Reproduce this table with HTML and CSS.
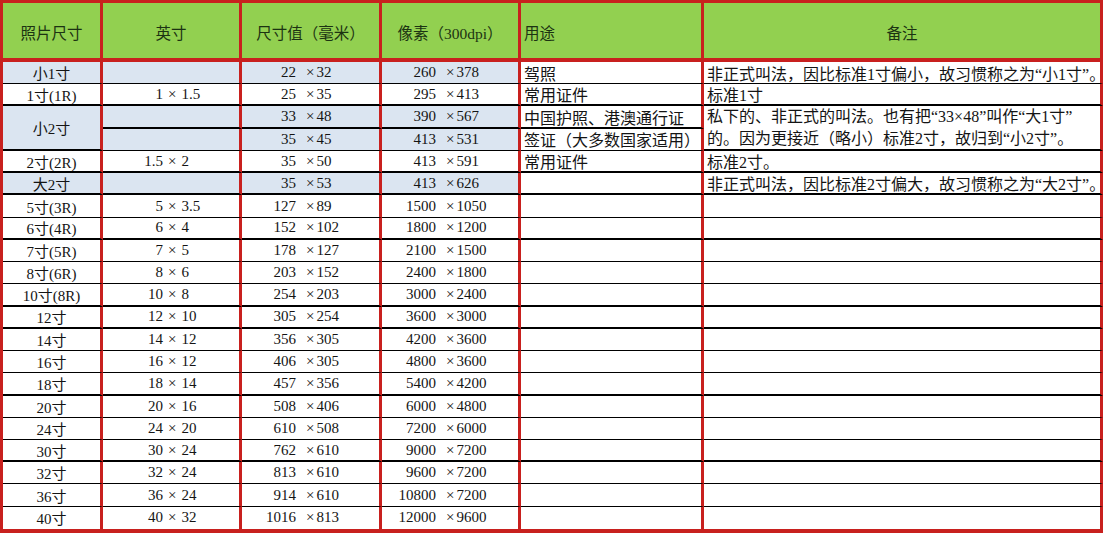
FILE: index.html
```html
<!DOCTYPE html>
<html lang="zh-CN">
<head>
<meta charset="utf-8">
<title>照片尺寸对照表</title>
<link rel="stylesheet" href="styles.css">
</head>
<body>
<div class="sheet">
  <div class="row">
    <div class="h">照片尺寸</div>
    <div class="h">英寸</div>
    <div class="h">尺寸值（毫米）</div>
    <div class="h">像素（300dpi）</div>
    <div class="h left">用途</div>
    <div class="h">备注</div>
  </div>

  <div class="row">
    <div class="c bl">小1寸</div>
    <div class="c bl"></div>
    <div class="c bl n3"><span class="a">22</span><span class="x">×</span><span>32</span></div>
    <div class="c bl n3"><span class="a">260</span><span class="x">×</span><span>378</span></div>
    <div class="c l">驾照</div>
    <div class="c l">非正式叫法，因比标准1寸偏小，故习惯称之为“小1寸”。</div>
  </div>

  <div class="row tk">
    <div class="c">1寸(1R)</div>
    <div class="c n2"><span class="a">1</span><span class="x">×</span><span>1.5</span></div>
    <div class="c n3"><span class="a">25</span><span class="x">×</span><span>35</span></div>
    <div class="c n3"><span class="a">295</span><span class="x">×</span><span>413</span></div>
    <div class="c l">常用证件</div>
    <div class="c l">标准1寸</div>
  </div>

  <div class="row tk">
    <div class="c bl span2">小2寸</div>
    <div class="c bl"></div>
    <div class="c bl n3"><span class="a">33</span><span class="x">×</span><span>48</span></div>
    <div class="c bl n3"><span class="a">390</span><span class="x">×</span><span>567</span></div>
    <div class="c l">中国护照、港澳通行证</div>
    <div class="c l span2 multi">私下的、非正式的叫法。也有把“33×48”叫作“大1寸”<br>的。因为更接近（略小）标准2寸，故归到“小2寸”。</div>
  </div>

  <div class="row">
    <div class="c bl"></div>
    <div class="c bl n3"><span class="a">35</span><span class="x">×</span><span>45</span></div>
    <div class="c bl n3"><span class="a">413</span><span class="x">×</span><span>531</span></div>
    <div class="c l">签证（大多数国家适用）</div>
  </div>

  <div class="row tk">
    <div class="c">2寸(2R)</div>
    <div class="c n2"><span class="a">1.5</span><span class="x">×</span><span>2</span></div>
    <div class="c n3"><span class="a">35</span><span class="x">×</span><span>50</span></div>
    <div class="c n3"><span class="a">413</span><span class="x">×</span><span>591</span></div>
    <div class="c l">常用证件</div>
    <div class="c l">标准2寸。</div>
  </div>

  <div class="row tk">
    <div class="c bl">大2寸</div>
    <div class="c bl"></div>
    <div class="c bl n3"><span class="a">35</span><span class="x">×</span><span>53</span></div>
    <div class="c bl n3"><span class="a">413</span><span class="x">×</span><span>626</span></div>
    <div class="c l"></div>
    <div class="c l">非正式叫法，因比标准2寸偏大，故习惯称之为“大2寸”。</div>
  </div>

  <div class="row">
    <div class="c">5寸(3R)</div>
    <div class="c n2"><span class="a">5</span><span class="x">×</span><span>3.5</span></div>
    <div class="c n3"><span class="a">127</span><span class="x">×</span><span>89</span></div>
    <div class="c n3"><span class="a">1500</span><span class="x">×</span><span>1050</span></div>
    <div class="c"></div>
    <div class="c"></div>
  </div>

  <div class="row tk">
    <div class="c">6寸(4R)</div>
    <div class="c n2"><span class="a">6</span><span class="x">×</span><span>4</span></div>
    <div class="c n3"><span class="a">152</span><span class="x">×</span><span>102</span></div>
    <div class="c n3"><span class="a">1800</span><span class="x">×</span><span>1200</span></div>
    <div class="c"></div>
    <div class="c"></div>
  </div>

  <div class="row">
    <div class="c">7寸(5R)</div>
    <div class="c n2"><span class="a">7</span><span class="x">×</span><span>5</span></div>
    <div class="c n3"><span class="a">178</span><span class="x">×</span><span>127</span></div>
    <div class="c n3"><span class="a">2100</span><span class="x">×</span><span>1500</span></div>
    <div class="c"></div>
    <div class="c"></div>
  </div>

  <div class="row">
    <div class="c">8寸(6R)</div>
    <div class="c n2"><span class="a">8</span><span class="x">×</span><span>6</span></div>
    <div class="c n3"><span class="a">203</span><span class="x">×</span><span>152</span></div>
    <div class="c n3"><span class="a">2400</span><span class="x">×</span><span>1800</span></div>
    <div class="c"></div>
    <div class="c"></div>
  </div>

  <div class="row tk">
    <div class="c">10寸(8R)</div>
    <div class="c n2"><span class="a">10</span><span class="x">×</span><span>8</span></div>
    <div class="c n3"><span class="a">254</span><span class="x">×</span><span>203</span></div>
    <div class="c n3"><span class="a">3000</span><span class="x">×</span><span>2400</span></div>
    <div class="c"></div>
    <div class="c"></div>
  </div>

  <div class="row tk">
    <div class="c">12寸</div>
    <div class="c n2"><span class="a">12</span><span class="x">×</span><span>10</span></div>
    <div class="c n3"><span class="a">305</span><span class="x">×</span><span>254</span></div>
    <div class="c n3"><span class="a">3600</span><span class="x">×</span><span>3000</span></div>
    <div class="c"></div>
    <div class="c"></div>
  </div>

  <div class="row">
    <div class="c">14寸</div>
    <div class="c n2"><span class="a">14</span><span class="x">×</span><span>12</span></div>
    <div class="c n3"><span class="a">356</span><span class="x">×</span><span>305</span></div>
    <div class="c n3"><span class="a">4200</span><span class="x">×</span><span>3600</span></div>
    <div class="c"></div>
    <div class="c"></div>
  </div>

  <div class="row">
    <div class="c">16寸</div>
    <div class="c n2"><span class="a">16</span><span class="x">×</span><span>12</span></div>
    <div class="c n3"><span class="a">406</span><span class="x">×</span><span>305</span></div>
    <div class="c n3"><span class="a">4800</span><span class="x">×</span><span>3600</span></div>
    <div class="c"></div>
    <div class="c"></div>
  </div>

  <div class="row tk">
    <div class="c">18寸</div>
    <div class="c n2"><span class="a">18</span><span class="x">×</span><span>14</span></div>
    <div class="c n3"><span class="a">457</span><span class="x">×</span><span>356</span></div>
    <div class="c n3"><span class="a">5400</span><span class="x">×</span><span>4200</span></div>
    <div class="c"></div>
    <div class="c"></div>
  </div>

  <div class="row">
    <div class="c">20寸</div>
    <div class="c n2"><span class="a">20</span><span class="x">×</span><span>16</span></div>
    <div class="c n3"><span class="a">508</span><span class="x">×</span><span>406</span></div>
    <div class="c n3"><span class="a">6000</span><span class="x">×</span><span>4800</span></div>
    <div class="c"></div>
    <div class="c"></div>
  </div>

  <div class="row">
    <div class="c">24寸</div>
    <div class="c n2"><span class="a">24</span><span class="x">×</span><span>20</span></div>
    <div class="c n3"><span class="a">610</span><span class="x">×</span><span>508</span></div>
    <div class="c n3"><span class="a">7200</span><span class="x">×</span><span>6000</span></div>
    <div class="c"></div>
    <div class="c"></div>
  </div>

  <div class="row tk">
    <div class="c">30寸</div>
    <div class="c n2"><span class="a">30</span><span class="x">×</span><span>24</span></div>
    <div class="c n3"><span class="a">762</span><span class="x">×</span><span>610</span></div>
    <div class="c n3"><span class="a">9000</span><span class="x">×</span><span>7200</span></div>
    <div class="c"></div>
    <div class="c"></div>
  </div>

  <div class="row">
    <div class="c">32寸</div>
    <div class="c n2"><span class="a">32</span><span class="x">×</span><span>24</span></div>
    <div class="c n3"><span class="a">813</span><span class="x">×</span><span>610</span></div>
    <div class="c n3"><span class="a">9600</span><span class="x">×</span><span>7200</span></div>
    <div class="c"></div>
    <div class="c"></div>
  </div>

  <div class="row">
    <div class="c">36寸</div>
    <div class="c n2"><span class="a">36</span><span class="x">×</span><span>24</span></div>
    <div class="c n3"><span class="a">914</span><span class="x">×</span><span>610</span></div>
    <div class="c n3"><span class="a">10800</span><span class="x">×</span><span>7200</span></div>
    <div class="c"></div>
    <div class="c"></div>
  </div>

  <div class="row end">
    <div class="c">40寸</div>
    <div class="c n2"><span class="a">40</span><span class="x">×</span><span>32</span></div>
    <div class="c n3"><span class="a">1016</span><span class="x">×</span><span>813</span></div>
    <div class="c n3"><span class="a">12000</span><span class="x">×</span><span>9600</span></div>
    <div class="c"></div>
    <div class="c"></div>
  </div>
</div>
</body>
</html>
```

FILE: styles.css
```css
* {
  box-sizing: border-box;
}

body {
  margin: 0;
  background: #ffffff;
  font-family: "Liberation Serif", "Noto Sans CJK SC", serif;
  font-size: 15px;
  color: #141414;
}

.sheet {
  display: grid;
  grid-template-columns: 100px 139px 140px 139px 183px 399px;
  grid-template-rows: 59px;
  grid-auto-rows: 22.24px;
  width: 1103px;
  border-left: 3px solid #c8201e;
  border-top: 3px solid #c8201e;
  border-bottom: 4px solid #c8201e;
}

.row {
  display: contents;
}

.h {
  display: flex;
  align-items: center;
  justify-content: center;
  padding-top: 3px;
  background: #92d050;
  color: #1c3312;
  font-size: 15.5px;
  border-right: 3px solid #c8201e;
  border-bottom: 4px solid #c8201e;
  white-space: nowrap;
}

.h.left {
  justify-content: flex-start;
  padding-left: 3px;
}

.c {
  display: flex;
  align-items: center;
  justify-content: center;
  white-space: nowrap;
  overflow: hidden;
  background: #ffffff;
  border-right: 3px solid #c8201e;
  border-bottom: 1px solid #000000;
}

.tk > .c {
  border-bottom-width: 2px;
}

.end > .c {
  border-bottom: 0;
}

.c.bl {
  background: #dbe5f1;
}

.c.l {
  justify-content: flex-start;
  padding-left: 3px;
  font-size: 16px;
}

.span2 {
  grid-row: span 2;
}

.c.multi {
  display: block;
  line-height: 22px;
  padding-top: 0;
}

.n2,
.n3 {
  justify-content: flex-start;
}

.n2 .a {
  width: 60px;
  text-align: right;
}

.n2 .x {
  margin: 0 5px;
}

.n3 .a {
  width: 54px;
  text-align: right;
}

.n3 .x {
  margin: 0 2px 0 10px;
}
```
